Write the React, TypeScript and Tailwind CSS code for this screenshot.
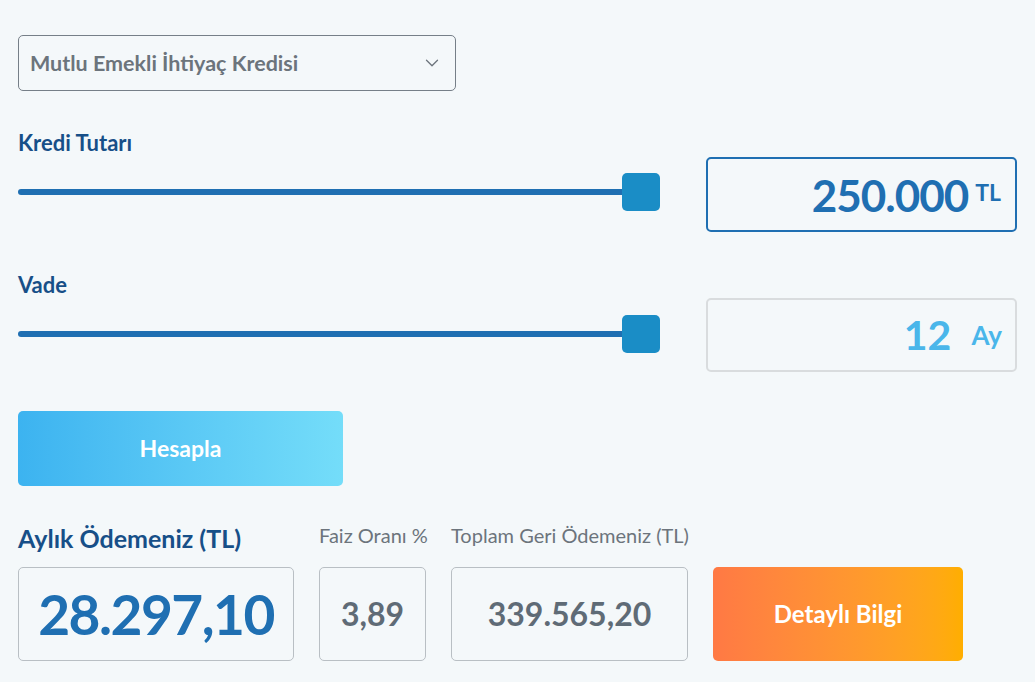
import { ChevronDown } from "lucide-react"

function Slider() {
  return (
    <div className="relative h-[38px] flex-1 flex items-center">
      <div className="h-[6px] w-full bg-[#1f6fb2] rounded-full" />
      <div className="absolute right-0 top-0 h-[38px] w-[38px] rounded-[5px] bg-[#1a8dc6]" />
    </div>
  )
}

export default function App() {
  return (
    <div className="min-h-[682px] w-[1035px] bg-[#f4f8fa] pl-[18px] pr-[18px] pt-[35px] font-['Lato',sans-serif]">
      <div className="w-[438px] h-[56px] rounded-[5px] border border-[#767f88] flex items-center justify-between pl-[11px] pr-[12px]">
        <span className="text-[21.5px] font-bold text-[#6c747c]">Mutlu Emekli İhtiyaç Kredisi</span>
        <ChevronDown className="w-[22px] h-[22px] text-[#6c747c]" strokeWidth={1.4} />
      </div>

      <div className="mt-[39px] text-[22px] font-bold text-[#174f88] leading-[26px]">Kredi Tutarı</div>
      <div className="mt-[1px] flex items-center gap-[46px]">
        <div className="flex-1 flex mb-[5px]">
          <Slider />
        </div>
        <div className="w-[311px] h-[75px] rounded-[5px] border-2 border-[#1f6fb2] flex items-center justify-end pr-[14px]">
          <span className="text-[44px] font-bold text-[#1f6fb2] tracking-[-1px]">250.000</span>
          <span className="ml-[7px] text-[23px] font-bold text-[#1f6fb2] -mt-[4px]">TL</span>
        </div>
      </div>

      <div className="mt-[40px] text-[22px] font-bold text-[#174f88] leading-[26px]">Vade</div>
      <div className="flex items-center gap-[46px]">
        <div className="flex-1 flex mb-[2px]">
          <Slider />
        </div>
        <div className="w-[311px] h-[74px] rounded-[5px] border-2 border-[#d9dcde] flex items-center justify-end pr-[13px]">
          <span className="text-[41px] font-bold text-[#4ab6ea]">12</span>
          <span className="ml-[20px] text-[26px] font-bold text-[#4ab6ea]">Ay</span>
        </div>
      </div>

      <button className="mt-[39px] block w-[325px] h-[75px] rounded-[5px] bg-gradient-to-r from-[#3cb3f0] to-[#74ddf9] text-white text-[23px] font-bold">
        Hesapla
      </button>

      <div className="mt-[37px] flex items-start gap-[25px]">
        <div className="flex flex-col w-[276px]">
          <div className="h-[32px] text-[25px] font-bold text-[#174f88] leading-[30px] whitespace-nowrap">Aylık Ödemeniz (TL)</div>
          <div className="mt-[12px] h-[94px] rounded-[5px] border border-[#b9bfc4] flex items-center justify-center">
            <span className="text-[55px] font-bold text-[#1f6fb2] tracking-[-1.5px]">28.297,10</span>
          </div>
        </div>
        <div className="flex flex-col w-[107px]">
          <div className="h-[32px] text-[20px] text-[#6c747c] leading-[24px] whitespace-nowrap">Faiz Oranı %</div>
          <div className="mt-[12px] h-[94px] rounded-[5px] border border-[#b9bfc4] flex items-center justify-center">
            <span className="text-[32px] font-bold text-[#5f6b76]">3,89</span>
          </div>
        </div>
        <div className="flex flex-col w-[237px]">
          <div className="h-[32px] text-[20px] text-[#6c747c] leading-[24px] whitespace-nowrap">Toplam Geri Ödemeniz (TL)</div>
          <div className="mt-[12px] h-[94px] rounded-[5px] border border-[#b9bfc4] flex items-center justify-center">
            <span className="text-[32px] font-bold text-[#5f6b76]">339.565,20</span>
          </div>
        </div>
        <button className="mt-[44px] w-[250px] h-[94px] rounded-[5px] bg-gradient-to-r from-[#ff7944] to-[#ffae00] text-white text-[24px] font-bold">
          Detaylı Bilgi
        </button>
      </div>
    </div>
  )
}
